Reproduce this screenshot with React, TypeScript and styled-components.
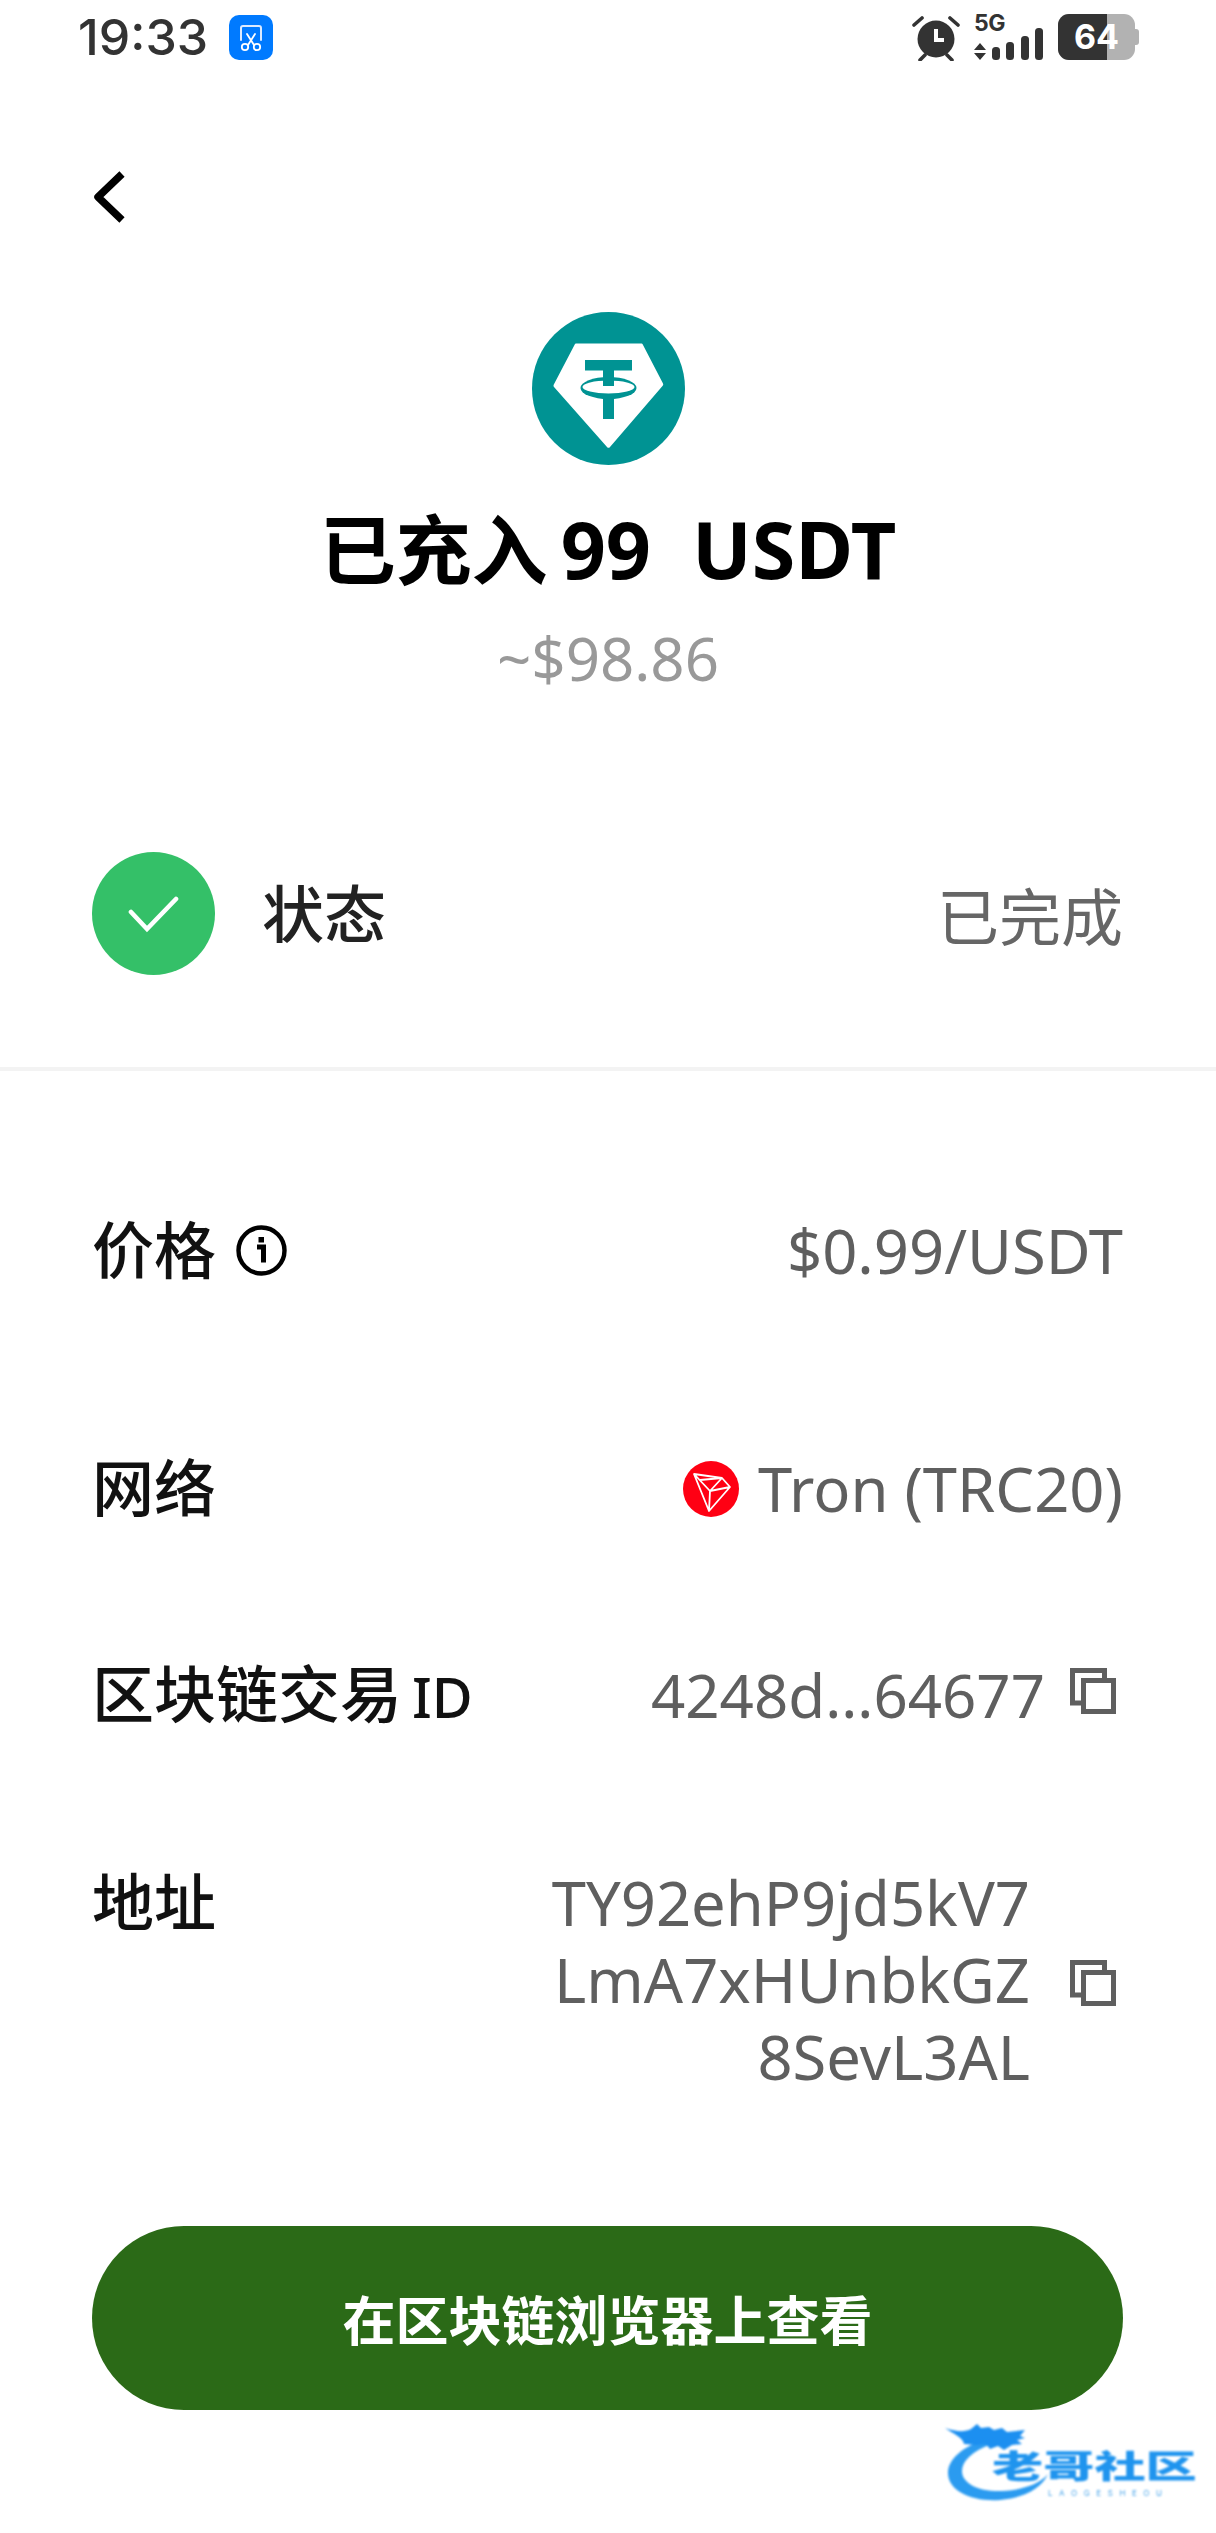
import React from 'react';
import styled, { createGlobalStyle } from 'styled-components';

const GlobalStyle = createGlobalStyle`
  html, body {
    margin: 0;
    padding: 0;
    background: #fff;
  }
  body {
    font-family: 'Noto Sans', 'Noto Sans CJK SC', sans-serif;
  }
`;

const Page = styled.div`
  position: relative;
  width: 1216px;
  height: 2533px;
  overflow: hidden;
  background: #fff;
`;

const StatusBar = styled.div`
  display: flex;
  align-items: center;
  justify-content: space-between;
  height: 74px;
  padding: 0 81px 0 78px;
`;

const StatusLeft = styled.div`
  display: flex;
  align-items: center;
  gap: 21px;
`;

const Time = styled.span`
  font-family: 'Inter', sans-serif;
  font-size: 50px;
  font-weight: 500;
  line-height: 74px;
  color: #333;
`;

const StatusRight = styled.div`
  display: flex;
  align-items: center;
  gap: 14px;
`;

const NetworkStack = styled.div`
  display: flex;
  flex-direction: column;
  justify-content: space-between;
  width: 70px;
  height: 46px;
`;

const FiveG = styled.span`
  height: 0;
  font-family: 'Inter', sans-serif;
  font-size: 23px;
  font-weight: 700;
  line-height: 19px;
  letter-spacing: -0.5px;
  color: #333;
`;

const Battery = styled.div`
  position: relative;
  width: 77px;
  height: 46px;
  border-radius: 11px;
  background: #b2b2b2;
  &::before {
    content: '';
    position: absolute;
    left: 0;
    top: 0;
    bottom: 0;
    width: 49px;
    border-radius: 11px 0 0 11px;
    background: #333;
  }
  &::after {
    content: '';
    position: absolute;
    right: -4px;
    top: 15px;
    width: 4px;
    height: 16px;
    border-radius: 0 3px 3px 0;
    background: #b2b2b2;
  }
`;

const BatteryLabel = styled.span`
  position: absolute;
  z-index: 1;
  left: 16px;
  top: 0;
  font-family: 'Inter', sans-serif;
  font-size: 34px;
  font-weight: 700;
  line-height: 46px;
  color: #fff;
`;

const BackButton = styled.div`
  display: flex;
  margin: 96px 0 0 91px;
  width: 36px;
  height: 54px;
`;

const Hero = styled.div`
  display: flex;
  flex-direction: column;
  align-items: center;
  margin-top: 88px;
`;

const Title = styled.h1`
  display: flex;
  align-items: baseline;
  margin: 40px 0 0;
  font-size: 76px;
  font-weight: 700;
  line-height: 88px;
  color: #000;
`;

const TitleAmount = styled.span`
  margin-left: 13px;
  font-size: 79px;
  white-space: pre;
`;

const Fiat = styled.div`
  margin-top: 26px;
  font-size: 60px;
  font-weight: 400;
  line-height: 76px;
  color: #999;
`;

const StatusRow = styled.div`
  display: flex;
  align-items: center;
  margin-top: 156px;
  padding: 0 93px 0 92px;
`;

const StatusBadge = styled.div`
  display: flex;
  align-items: center;
  justify-content: center;
  width: 123px;
  height: 123px;
  border-radius: 50%;
  background: #34c068;
`;

const StatusLabel = styled.span`
  flex: 1;
  margin: 0 0 6px 47px;
  font-size: 62px;
  font-weight: 500;
  color: #222;
`;

const StatusValue = styled.span`
  font-size: 62px;
  font-weight: 400;
  color: #666;
`;

const Divider = styled.div`
  height: 4px;
  margin-top: 92px;
  background: #f3f3f3;
`;

const DetailList = styled.div`
  display: flex;
  flex-direction: column;
  gap: 130px;
  margin-top: 141px;
  padding: 0 93px 0 92px;
`;

const Row = styled.div<{ $extra?: number }>`
  display: flex;
  justify-content: space-between;
  align-items: flex-start;
  margin-bottom: ${p => p.$extra ?? 0}px;
`;

const Label = styled.div`
  display: flex;
  align-items: center;
  gap: 20px;
  height: 77px;
  font-size: 62px;
  font-weight: 500;
  line-height: 77px;
  white-space: pre;
  color: #111;
`;

const LabelCode = styled.span`
  margin-left: 10px;
  font-size: 56px;
`;

const Value = styled.div<{ $gap?: number; $size?: number }>`
  display: flex;
  align-items: center;
  gap: ${p => p.$gap ?? 25}px;
  font-size: ${p => p.$size ?? 61.5}px;
  font-weight: 400;
  line-height: 77px;
  color: #5f5f5f;
`;

const AddressLines = styled.div`
  text-align: right;
`;

const AddressLine = styled.div`
  white-space: nowrap;
`;

const CopyBox = styled.div`
  display: flex;
  margin: 0 7px 10px 0;
`;

const AddressCopy = styled.div`
  display: flex;
  margin: 6px 7px 0 15px;
`;

const ViewButton = styled.div`
  display: flex;
  align-items: center;
  justify-content: center;
  height: 184px;
  margin: 131px 93px 0 92px;
  border-radius: 92px;
  background: #2b6a17;
  font-size: 53px;
  font-weight: 700;
  color: #fff;
`;

const Watermark = styled.div`
  position: absolute;
  left: 945px;
  top: 2423px;
  width: 252px;
  height: 80px;
  filter: blur(0.8px);
`;

const WatermarkName = styled.div`
  position: absolute;
  left: 47px;
  top: 23px;
  font-family: 'Noto Sans CJK SC', sans-serif;
  font-size: 32px;
  font-weight: 900;
  line-height: 36px;
  white-space: nowrap;
  color: #1f94ee;
  transform: scaleX(1.6);
  transform-origin: left center;
`;

const WatermarkSub = styled.div`
  position: absolute;
  left: 103px;
  top: 65px;
  font-family: 'Inter', sans-serif;
  font-size: 8px;
  line-height: 10px;
  letter-spacing: 6.6px;
  white-space: nowrap;
  color: #4aa5ea;
`;

const ScreenshotIcon = () => (
  <svg width="44" height="45" viewBox="0 0 44 45">
    <rect width="44" height="45" rx="10" fill="#007aff" />
    <path d="M12 25V13a2 2 0 0 1 2-2h16a2 2 0 0 1 2 2v12" fill="none" stroke="#dbeaff" strokeWidth="2" strokeLinecap="round" />
    <path d="M18 19l7 11M26 19l-7 11" fill="none" stroke="#fff" strokeWidth="1.8" strokeLinecap="round" />
    <circle cx="16" cy="32" r="3.2" fill="none" stroke="#fff" strokeWidth="1.8" />
    <circle cx="28" cy="32" r="3.2" fill="none" stroke="#fff" strokeWidth="1.8" />
  </svg>
);

const AlarmIcon = () => (
  <svg width="48" height="47" viewBox="0 0 48 47">
    <circle cx="24" cy="25" r="18.5" fill="#333" />
    <path d="M24 15v11h8" fill="none" stroke="#fff" strokeWidth="4" />
    <path d="M2 11l8-7M46 11l-8-7M8 46l5-5M40 46l-5-5" stroke="#333" strokeWidth="3.6" strokeLinecap="round" />
  </svg>
);

const SignalIcon = () => (
  <svg width="70" height="32" viewBox="0 0 70 32">
    <path d="M6 15l6 7H0zM6 32l-6-7h12z" fill="#333" />
    <rect x="18" y="19" width="8" height="13" rx="3.5" fill="#333" />
    <rect x="32" y="14" width="8" height="18" rx="3.5" fill="#333" />
    <rect x="47" y="8" width="8" height="24" rx="3.5" fill="#333" />
    <rect x="61" y="0" width="8" height="32" rx="3.5" fill="#333" />
  </svg>
);

const BackIcon = () => (
  <svg width="36" height="54" viewBox="0 0 36 54">
    <path d="M31 4L7 27l24 23" fill="none" stroke="#000" strokeWidth="7.5" strokeLinejoin="round" />
  </svg>
);

const TetherLogo = () => (
  <svg width="153" height="153" viewBox="0 0 153 153">
    <circle cx="76.5" cy="76.5" r="76.5" fill="#009393" />
    <path d="M44 31.5h65.5a1 1 0 0 1 1 .6L131 71.5a2 2 0 0 1-.3 2.3L78 135a2 2 0 0 1-3 0L22 75a2 2 0 0 1-.3-2.3L43 32a1 1 0 0 1 1-.5z" fill="#fff" />
    <rect x="53" y="48" width="47" height="10.5" fill="#009393" />
    <ellipse cx="76.5" cy="76" rx="28" ry="11" fill="#009393" />
    <ellipse cx="76.5" cy="75" rx="26" ry="6.4" fill="#fff" />
    <rect x="71" y="58" width="11" height="16" fill="#009393" />
    <rect x="71" y="84" width="11" height="23" fill="#009393" />
  </svg>
);

const CheckIcon = () => (
  <svg width="51" height="38" viewBox="0 0 51 38">
    <path d="M3 17l16 17L48 4" fill="none" stroke="#fff" strokeWidth="4.6" strokeLinecap="round" />
  </svg>
);

const InfoIcon = () => (
  <svg width="51" height="51" viewBox="0 0 51 51">
    <circle cx="25.5" cy="25.5" r="23" fill="none" stroke="#000" strokeWidth="4.4" />
    <rect x="22.5" y="12" width="5.5" height="5.5" fill="#000" />
    <path d="M21 22h6.5v15.5" fill="none" stroke="#000" strokeWidth="5" />
  </svg>
);

const TronIcon = () => (
  <svg width="56" height="56" viewBox="0 0 56 56">
    <circle cx="28" cy="28" r="28" fill="#ff0013" />
    <path
      d="M11 13l28 4 8 9-21 24zM11 13l16 17 20-4M27 30l-1 20M27 30l12-13M17 19l22-2"
      fill="none"
      stroke="#fff"
      strokeWidth="1.8"
      strokeLinejoin="round"
    />
  </svg>
);

const CopyIcon = () => (
  <svg width="46" height="46" viewBox="0 0 46 46">
    <path d="M11 35H2.5V2.5h32V10" fill="none" stroke="#5f5f5f" strokeWidth="5" />
    <rect x="13.5" y="12.5" width="30" height="31" fill="none" stroke="#5f5f5f" strokeWidth="5" />
  </svg>
);

const DragonMark = () => (
  <svg width="252" height="80" viewBox="0 0 252 80">
    <path
      d="M38 17C18 24 3 36 3 50c0 18 24 29 52 27 24-2 42-12 48-26-8 10-26 16-46 17-22 1-40-7-40-20 0-10 10-20 30-27z"
      fill="#2b9bf0"
    />
    <path
      d="M0 5c12 4 20 4 26 1l6-5 4 4 8-1 5 3 8-2 5 4 18-2-5 6 5 2-8 2 5 4-10 1-8 5-6-4-8 3-4-5-10 1-12-1C18 14 8 11 0 5z"
      fill="#1c8ff0"
    />
  </svg>
);

const App = () => (
  <Page>
    <GlobalStyle />
    <StatusBar>
      <StatusLeft>
        <Time>19:33</Time>
        <ScreenshotIcon />
      </StatusLeft>
      <StatusRight>
        <AlarmIcon />
        <NetworkStack>
          <FiveG>5G</FiveG>
          <SignalIcon />
        </NetworkStack>
        <Battery>
          <BatteryLabel>64</BatteryLabel>
        </Battery>
      </StatusRight>
    </StatusBar>

    <BackButton>
      <BackIcon />
    </BackButton>

    <Hero>
      <TetherLogo />
      <Title>
        已充入
        <TitleAmount>99  USDT</TitleAmount>
      </Title>
      <Fiat>~$98.86</Fiat>
    </Hero>

    <StatusRow>
      <StatusBadge>
        <CheckIcon />
      </StatusBadge>
      <StatusLabel>状态</StatusLabel>
      <StatusValue>已完成</StatusValue>
    </StatusRow>

    <Divider />

    <DetailList>
      <Row $extra={31}>
        <Label>
          价格
          <InfoIcon />
        </Label>
        <Value>$0.99/USDT</Value>
      </Row>
      <Row>
        <Label>网络</Label>
        <Value $gap={19}>
          <TronIcon />
          Tron (TRC20)
        </Value>
      </Row>
      <Row>
        <Label>
          <span>
            区块链交易<LabelCode>ID</LabelCode>
          </span>
        </Label>
        <Value $size={60}>
          4248d...64677
          <CopyBox>
            <CopyIcon />
          </CopyBox>
        </Value>
      </Row>
      <Row>
        <Label>地址</Label>
        <Value>
          <AddressLines>
            <AddressLine>TY92ehP9jd5kV7</AddressLine>
            <AddressLine>LmA7xHUnbkGZ</AddressLine>
            <AddressLine>8SevL3AL</AddressLine>
          </AddressLines>
          <AddressCopy>
            <CopyIcon />
          </AddressCopy>
        </Value>
      </Row>
    </DetailList>

    <ViewButton>在区块链浏览器上查看</ViewButton>

    <Watermark>
      <DragonMark />
      <WatermarkName>老哥社区</WatermarkName>
      <WatermarkSub>LAOGESHEOU</WatermarkSub>
    </Watermark>
  </Page>
);

export default App;
